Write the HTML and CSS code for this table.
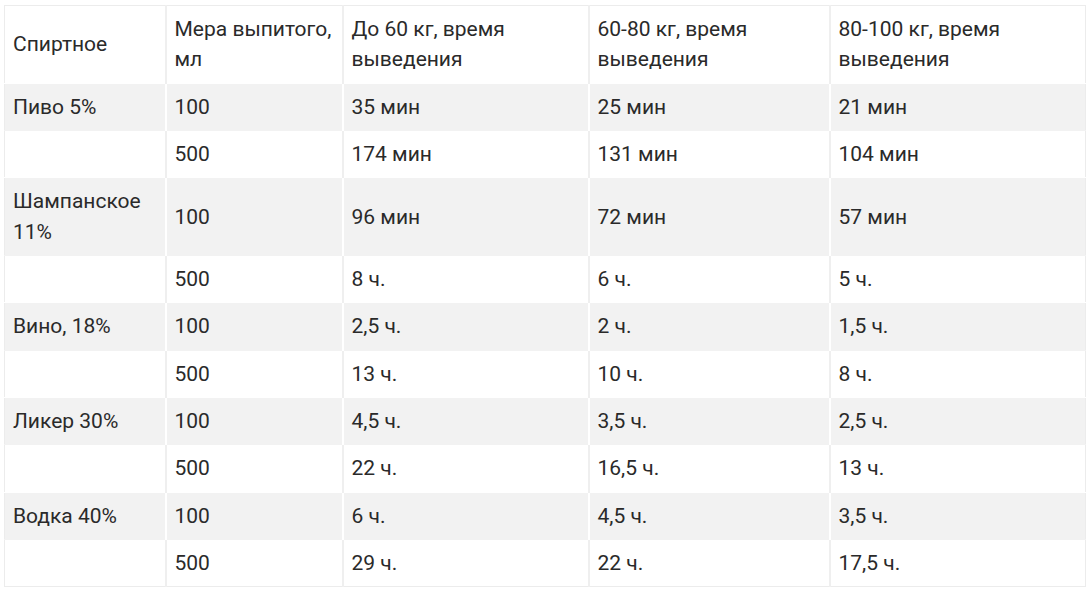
FILE: index.html
```html
<!DOCTYPE html>
<html lang="ru">
<head>
<meta charset="utf-8">
<link rel="stylesheet" href="styles.css">
</head>
<body>
<table class="tbl">
  <colgroup>
    <col class="c1"><col class="c2"><col class="c3"><col class="c4"><col class="c5">
  </colgroup>
  <thead>
    <tr><td>Спиртное</td><td>Мера выпитого, мл</td><td>До 60 кг, время выведения</td><td>60-80 кг, время выведения</td><td>80-100 кг, время выведения</td></tr>
  </thead>
  <tbody>
    <tr class="alt"><td>Пиво 5%</td><td>100</td><td>35 мин</td><td>25 мин</td><td>21 мин</td></tr>
    <tr><td></td><td>500</td><td>174 мин</td><td>131 мин</td><td>104 мин</td></tr>
    <tr class="alt"><td>Шампанское 11%</td><td>100</td><td>96 мин</td><td>72 мин</td><td>57 мин</td></tr>
    <tr><td></td><td>500</td><td>8 ч.</td><td>6 ч.</td><td>5 ч.</td></tr>
    <tr class="alt"><td>Вино, 18%</td><td>100</td><td>2,5 ч.</td><td>2 ч.</td><td>1,5 ч.</td></tr>
    <tr><td></td><td>500</td><td>13 ч.</td><td>10 ч.</td><td>8 ч.</td></tr>
    <tr class="alt"><td>Ликер 30%</td><td>100</td><td>4,5 ч.</td><td>3,5 ч.</td><td>2,5 ч.</td></tr>
    <tr><td></td><td>500</td><td>22 ч.</td><td>16,5 ч.</td><td>13 ч.</td></tr>
    <tr class="alt"><td>Водка 40%</td><td>100</td><td>6 ч.</td><td>4,5 ч.</td><td>3,5 ч.</td></tr>
    <tr><td></td><td>500</td><td>29 ч.</td><td>22 ч.</td><td>17,5 ч.</td></tr>
  </tbody>
</table>
</body>
</html>
```
FILE: styles.css
```css
html, body {
  margin: 0;
  padding: 0;
  background: #fff;
}
body {
  padding: 5px 0 0 4px;
  font-family: Roboto, "Liberation Sans", sans-serif;
  color: #2a2a2a;
}
.tbl {
  border-collapse: collapse;
  table-layout: fixed;
  width: 1081px;
  font-size: 21px;
  line-height: 30.35px;
  border: 1px solid #ececec;
}
.c1 { width: 161px; }
.c2 { width: 177px; }
.c3 { width: 246px; }
.c4 { width: 241px; }
.c5 { width: 256px; }
.tbl td {
  padding: 8px 8px 8px 8px;
  vertical-align: middle;
  border-right: 2px solid #efefef;
  border-bottom: 1px solid #fff;
}
.tbl td:last-child { border-right: 1px solid #ececec; }
.tbl tr.alt td {
  background: #f2f2f2;
  border-right-color: #fff;
  border-bottom-color: #f2f2f2;
}
.tbl tr.alt td:last-child { border-right-color: #ececec; }
.tbl tbody tr:last-child td { border-bottom: 1px solid #ececec; }
```
